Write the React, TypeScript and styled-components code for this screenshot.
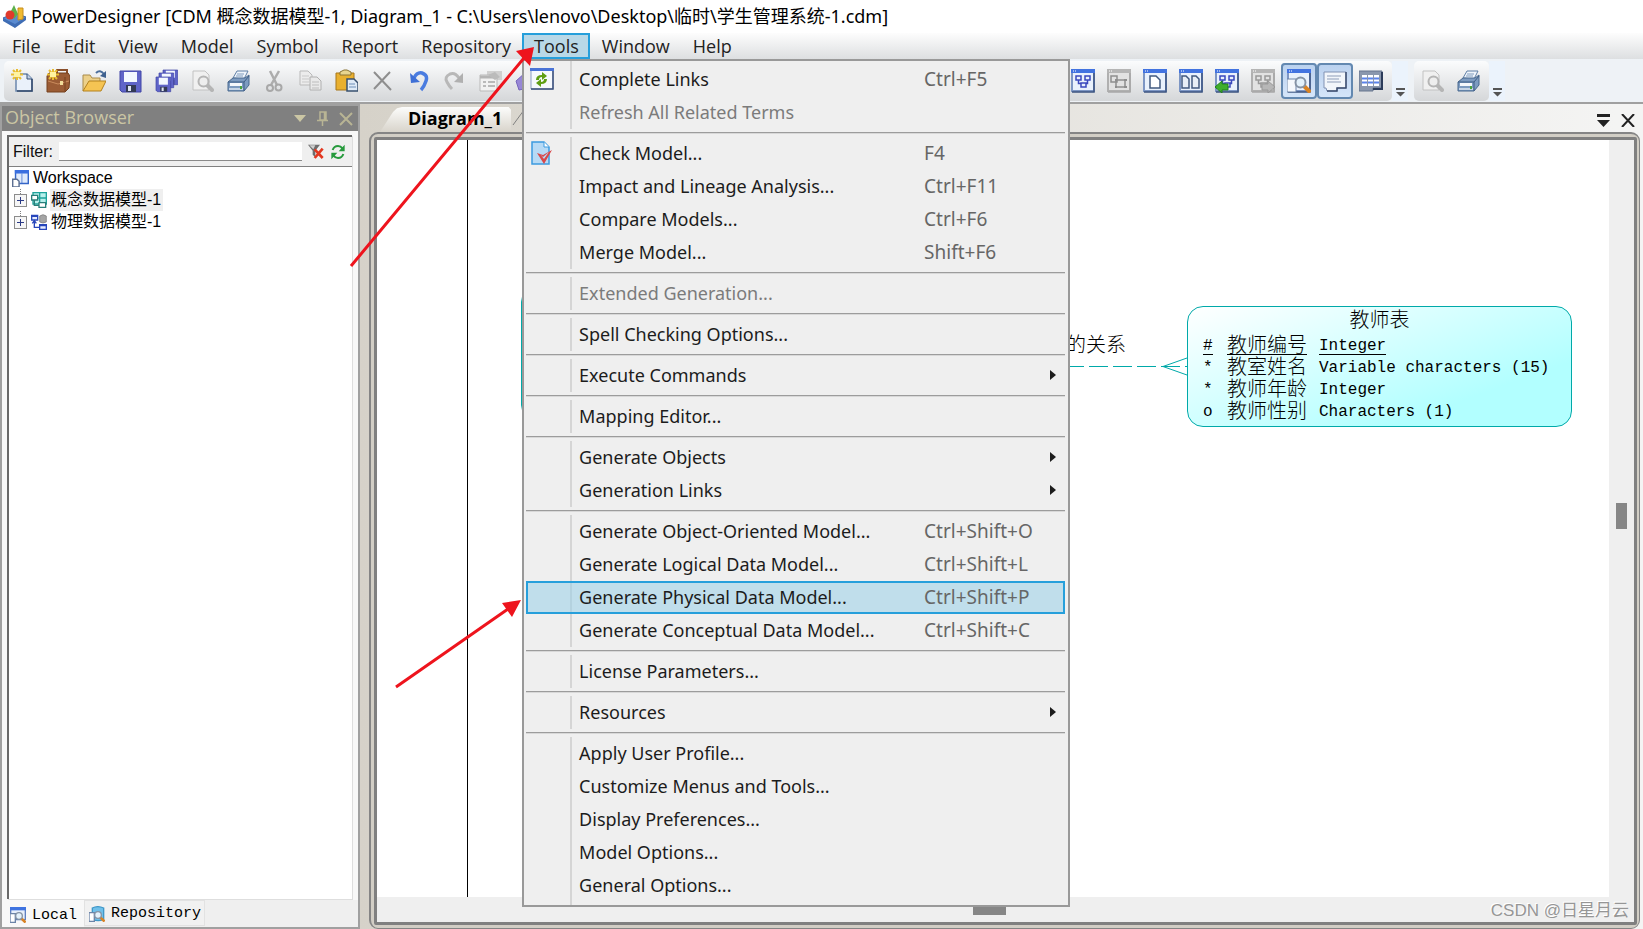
import React from "react";
import styled, { createGlobalStyle, css } from "styled-components";

const ui = `"Open Sans", "Noto Sans", "Noto Sans CJK SC", sans-serif`;
const wide = `"Noto Sans", "Noto Sans CJK SC", sans-serif`;
const arial = `"Liberation Sans", "Noto Sans CJK SC", sans-serif`;
const mono = `"Liberation Mono", "Noto Sans CJK SC", monospace`;

const GlobalStyle = createGlobalStyle`
  * { box-sizing: border-box; }
  body { margin: 0; background: #eef2f6; font-family: ${ui}; font-size: 18px; color: #111; }
  button, input { font: inherit; color: inherit; margin: 0; }
  button { border: 0; padding: 0; background: none; cursor: default; }
  svg { display: block; flex: none; }
`;

const Window = styled.div`
  position: relative;
  display: flex;
  flex-direction: column;
  height: 100vh;
  overflow: hidden;
`;

const TitleBar = styled.header`
  display: flex;
  align-items: center;
  gap: 4px;
  height: 33px;
  padding: 0 3px 2px;
  background: #fff;
  color: #000;
  white-space: nowrap;
`;

const Title = styled.h1`
  margin: 0;
  font-family: ${wide};
  font-size: 18px;
  line-height: 24px;
  font-weight: 400;
`;

const MenuBar = styled.nav`
  position: relative;
  z-index: 3;
  display: flex;
  height: 26px;
  background: linear-gradient(#fdfdfd, #dddfe1);
`;

const MenuItem = styled.div`
  position: relative;
`;

const MenuButton = styled.button<{ $open?: boolean }>`
  height: 26px;
  padding: 0 11px 0 12px;
  line-height: 26px;
  color: #222;
  ${(p) =>
    p.$open &&
    css`
      background: #b9d8e7;
      box-shadow: inset 0 0 0 2px #269fdb;
    `}
`;

const DropDown = styled.div`
  position: absolute;
  top: 26px;
  left: 0;
  width: 548px;
  padding: 2px 3px 3px 2px;
  background: linear-gradient(90deg, transparent 48px, #d5d5d5 48px, #d5d5d5 50px, transparent 50px) #efefef;
  background-origin: border-box;
  border: 2px solid #999;
  font-family: ${wide};
`;

const Entry = styled.button<{ $active?: boolean; $off?: boolean }>`
  display: grid;
  grid-template-columns: 53px 345px 126px 1fr;
  align-items: center;
  width: 100%;
  height: 33px;
  padding-bottom: 2px;
  text-align: left;
  white-space: nowrap;
  color: ${(p) => (p.$off ? "#7b7b7b" : "#1c1c1c")};
  ${(p) =>
    p.$active &&
    css`
      background: rgba(150, 208, 232, 0.52);
      box-shadow: inset 0 0 0 2px #269fdb;
    `}
`;

const Shortcut = styled.span`
  font-size: 19px;
  color: #666;
`;

const Rule = styled.hr`
  height: 8px;
  margin: 0;
  border: 0;
  background: linear-gradient(#efefef 3px, #9c9c9c 3px, #9c9c9c 4px, #d8d8d8 4px, #d8d8d8 5px, #efefef 5px);
`;

const ToolRow = styled.div`
  display: flex;
  height: 45px;
  padding: 2px 0 1px 4px;
  border-bottom: 2px solid #a0a0a0;
`;

const ToolGroup = styled.div<{ $grow?: boolean }>`
  display: flex;
  align-items: center;
  flex: ${(p) => (p.$grow ? "0 1 1388px" : "none")};
  padding-right: 3px;
  height: 40px;
  border-radius: 5px;
  background: linear-gradient(#fbfcfd, #d5d7d9);
`;

const Spacer = styled.div`
  flex: 1;
`;

const ToolButton = styled.button<{ $on?: boolean }>`
  display: flex;
  align-items: center;
  justify-content: center;
  width: 36px;
  height: 36px;
  border-radius: 4px;
  ${(p) =>
    p.$on &&
    css`
      background: linear-gradient(#b9d0ee, #d6e6fa);
      box-shadow: inset 0 0 0 2px #6388b0;
    `}
`;

const Overflow = styled.button`
  display: flex;
  align-items: flex-end;
  justify-content: center;
  width: 16px;
  height: 40px;
  margin-right: 6px;
  padding-bottom: 4px;
  background: #ebf3fc;
`;

const Body = styled.div`
  display: flex;
  flex: 1;
  min-height: 0;
`;

const Panel = styled.aside`
  display: flex;
  flex-direction: column;
  flex: none;
  width: 360px;
  border: 2px solid #a0a0a0;
  background: #f8f8f8;
`;

const PanelHeader = styled.div`
  display: flex;
  align-items: center;
  gap: 11px;
  height: 25px;
  padding: 0 5px 0 3px;
  background: #808080;
  color: #cbc6a4;
`;

const PanelTitle = styled.h2`
  flex: 1;
  margin: 0;
  padding-bottom: 2px;
  font-size: 18px;
  line-height: 23px;
  font-weight: 400;
`;

const Sunken = styled.div`
  display: flex;
  flex-direction: column;
  flex: 1;
  margin: 4px 6px 0 5px;
  border: solid #696969;
  border-width: 2px 0 0 2px;
  box-shadow: 1px 1px 0 #dedede;
  background: #fff;
`;

const FilterRow = styled.div`
  display: flex;
  align-items: center;
  gap: 6px;
  height: 30px;
  padding: 0 6px 0 4px;
  background: #efefef;
  border-bottom: 1px solid #808080;
  font-family: ${arial};
  font-size: 16px;
  line-height: 20px;
`;

const FilterInput = styled.input`
  flex: 1;
  min-width: 0;
  height: 19px;
  border: 0;
  border-bottom: 1px solid #8a8a8a;
  outline: 0;
  background: #fff;
`;

const Tree = styled.ul`
  list-style: none;
  margin: 0;
  padding: 0 0 0 3px;
  font-family: ${arial};
  font-size: 16px;
  line-height: 22px;
  color: #000;
`;

const TreeRow = styled.li<{ $child?: boolean }>`
  display: flex;
  align-items: center;
  gap: 3px;
  height: 22px;
  padding-left: ${(p) => (p.$child ? "2px" : "0")};
`;

const TreeLabel = styled.span<{ $selected?: boolean }>`
  padding: 0 2px 0 1px;
  background: ${(p) => (p.$selected ? "#efefef" : "none")};
`;

const PanelTabs = styled.div`
  display: flex;
  height: 27px;
  margin-top: 1px;
  background: #efefef;
  font-family: ${mono};
  font-size: 15px;
  color: #000;
`;

const PanelTab = styled.button<{ $on?: boolean }>`
  display: flex;
  align-items: center;
  gap: 6px;
  height: ${(p) => (p.$on ? "27px" : "26px")};
  padding: ${(p) => (p.$on ? "3px 7px 0 8px" : "1px 3px 0 4px")};
  background: ${(p) => (p.$on ? "#f8f8f8" : "#f1f1f1")};
  border: solid #e2e2e2;
  border-width: ${(p) => (p.$on ? "0" : "1px")};
`;

const Workspace = styled.main`
  display: flex;
  flex-direction: column;
  flex: 1;
  min-width: 0;
  padding: 0 3px 0 9px;
  background: linear-gradient(90deg, #d6d2c9, #f4f4f3 98%);
`;

const TabStrip = styled.div`
  display: flex;
  align-items: flex-end;
  height: 28px;
  padding: 0 5px 0 11px;
`;

const DocTab = styled.button`
  height: 25px;
  padding: 0 9px 2px 28px;
  line-height: 23px;
  font-weight: 700;
  color: #000;
  background: linear-gradient(#fcfcfb, #d8d4cb);
  clip-path: polygon(0 100%, 13px 20%, 17px 5%, 22px 0, 98% 0, 100% 12%, 100% 100%);
`;

const TabTools = styled.div`
  display: flex;
  align-items: center;
  gap: 11px;
  height: 24px;
  margin-left: auto;
`;

const Frame = styled.div`
  display: flex;
  flex: 1;
  min-height: 0;
  padding: 3px 2px 3px 3px;
  border: solid #858585;
  border-width: 2px 1px 1px 2px;
  border-radius: 9px;
  background: #d2cec5;
`;

const Sheet = styled.div`
  display: grid;
  grid-template: 1fr 25px / 1fr 25px;
  flex: 1;
  border: 3px solid #808080;
  border-radius: 2px;
  background: #efefef;
`;

const Paper = styled.div`
  position: relative;
  overflow: hidden;
  background: #fff;
`;

const PageEdge = styled.div`
  position: absolute;
  top: 0;
  bottom: 0;
  left: 90px;
  border-left: 1px solid #000;
`;

const Track = styled.div<{ $wide?: boolean }>`
  display: flex;
  align-items: ${(p) => (p.$wide ? "center" : "flex-start")};
  justify-content: ${(p) => (p.$wide ? "flex-start" : "center")};
  padding: ${(p) => (p.$wide ? "0 0 0 596px" : "363px 0 0")};
`;

const Thumb = styled.div<{ $wide?: boolean }>`
  width: ${(p) => (p.$wide ? "33px" : "11px")};
  height: ${(p) => (p.$wide ? "11px" : "26px")};
  background: #868686;
`;

const Entity = styled.section<{ $x: number; $y: number; $w: number; $h: number }>`
  position: absolute;
  left: ${(p) => p.$x}px;
  top: ${(p) => p.$y}px;
  width: ${(p) => p.$w}px;
  height: ${(p) => p.$h}px;
  padding: 0 15px;
  border: 1px solid #00a9a9;
  border-radius: 16px;
  background: linear-gradient(160deg, #fff, #b2ffff 75%);
  font-family: ${mono};
  font-size: 16px;
  line-height: 22px;
  color: #000;
  white-space: nowrap;
`;

const EntityName = styled.h3`
  margin: 0;
  height: 28px;
  line-height: 30px;
  font-size: 20px;
  font-weight: 300;
  text-align: center;
`;

const Attribute = styled.div<{ $key?: boolean }>`
  display: grid;
  grid-template: 22px / 24px 92px 1fr;
  span {
    justify-self: start;
    height: 20px;
    border-bottom: ${(p) => (p.$key ? "1px solid #000" : "0")};
  }
`;

const Han = styled.span`
  font-size: 20px;
  line-height: 24px;
  font-weight: 300;
`;

const RelationName = styled.div`
  position: absolute;
  left: 689px;
  top: 194px;
  font-family: ${mono};
  font-size: 20px;
  font-weight: 300;
  line-height: 26px;
  color: #000;
`;

const RelationLine = styled.svg`
  position: absolute;
  left: 660px;
  top: 210px;
`;

const Watermark = styled.div`
  position: absolute;
  right: 14px;
  bottom: 5px;
  font-family: ${arial};
  font-size: 17px;
  line-height: 26px;
  color: #969696;
  text-shadow: -1px -1px 0 #fff;
`;

const Arrows = styled.svg`
  position: absolute;
  z-index: 4;
  left: 0;
  top: 0;
  pointer-events: none;
`;

type Kid = { children?: React.ReactNode; size?: number };
const Ico = ({ children, size = 24 }: Kid) => (
  <svg width={size} height={size} viewBox="0 0 24 24" fill="none" aria-hidden="true">
    {children}
  </svg>
);

const Star = () => (
  <g stroke="#e8bd32" strokeWidth="2">
    <path d="M7 0v11M1 5.500h12M3 1l8 9M11 1l-8 9" />
    <rect x="4" y="3" width="6" height="5" fill="#fff3a0" stroke="none" />
  </g>
);

const Lens = ({ gray, x = 0, y = 0 }: { gray?: boolean; x?: number; y?: number }) => (
  <g transform={`translate(${x} ${y})`}>
    <path d="M16 16l5 5" stroke={gray ? "#b5b5b5" : "#d98324"} strokeWidth="4" strokeLinecap="round" />
    <circle cx="12.500" cy="12.500" r="5" fill={gray ? "#eee" : "#e3f1fb"} stroke={gray ? "#b5b5b5" : "#8593a5"} strokeWidth="2" />
  </g>
);

const FloppyShape = ({ x, y, s }: { x: number; y: number; s: number }) => (
  <g transform={`translate(${x} ${y}) scale(${s})`}>
    <path d="M0 0h21v21H2l-2-2z" fill="#5f64c8" stroke="#4145a6" />
    <path d="M4 1h13v10H4z" fill="#f3f8ff" />
    <path d="M6 14h10v7H6z" fill="#333a55" />
    <path d="M8 15h3v5H8z" fill="#dfe6f3" />
  </g>
);

const PrinterIcon = () => (
  <Ico>
    <path d="M7 9l4-7h11l-4 8z" fill="#eef4fb" stroke="#5f7fa6" />
    <path d="M11 5h7M10 7h7" stroke="#7f9bbd" />
    <path d="M2 13l5-4h12l4-3v10l-5 6H2z" fill="#7d9bc0" stroke="#49698f" />
    <path d="M2 13h16l5-6M18 13v9" stroke="#3f5d84" />
    <path d="M4 14h12v3H4z" fill="#f5f8fc" />
    <path d="M3 19h14v2H3z" fill="#c7d5e6" />
    <path d="M14 17h2v3h-2z" fill="#4aa53b" />
  </Ico>
);

const PreviewIcon = () => (
  <Ico>
    <path d="M3 2h12l4 4v15H3z" fill="#f0f0f0" stroke="#c2c2c2" />
    <Lens gray x={1} />
  </Ico>
);

const WinFrame = ({ gray, children }: { gray?: boolean; children?: React.ReactNode }) => (
  <Ico>
    <path d="M1 1h22v21H1z" fill={gray ? "#e2e2e2" : "#e9f1fc"} stroke={gray ? "#b0b0b0" : "#7d96c4"} strokeWidth="2" />
    <path d="M0 0h24v4H0z" fill={gray ? "#b5b5b5" : "#4273e0"} />
    <path d="M2 2h1M4 2h1" stroke="#fff" />
    <path d="M23 4v19H1" stroke={gray ? "#a8a8a8" : "#3c5480"} strokeWidth="1.500" />
    {children}
  </Ico>
);

const Nodes = ({ color }: { color: string }) => (
  <path d="M5 7h5v4H5zM14 7h5v4h-5zM10 14h5v4h-5zM7.500 11v3.500h3M16.500 11v3.500h-2" stroke={color} strokeWidth="1.500" />
);

const leftIcons: [string, React.ReactNode][] = [
  ["New Model", <Ico><path d="M6 5h11l5 5v12H6z" fill="#eaf1fa" stroke="#6b86ad" strokeWidth="1.500" /><path d="M17 5v5h5" fill="#bfd0e6" stroke="#3b5377" /><path d="M22 10v12H7" stroke="#34496b" strokeWidth="1.500" /><Star /></Ico>],
  ["New Project", <Ico><path d="M11 4V1h10v4" stroke="#8a4f2b" strokeWidth="2" /><path d="M1 7l2-3h19l2 3-1 12-4 4H1z" fill="#9b5c35" stroke="#74401f" /><path d="M2 12l10 3 11-3" stroke="#c98b5c" /><path d="M19 8v14" stroke="#74401f" /><path d="M14 12h3v4h-3z" fill="#f1dc9a" /><Star /></Ico>],
  ["Open", <Ico><path d="M1 22V6h7l2 3h8v3" fill="#ecd08a" stroke="#a98b4a" /><path d="M1 22l6-10h17l-5 10z" fill="#f5c453" stroke="#b3811f" /><path d="M14 4q4-4 8 1" stroke="#4c6f9c" strokeWidth="2" /><path d="M24 2v7l-6-2z" fill="#3f618f" /></Ico>],
  ["Save", <Ico><FloppyShape x={2} y={2} s={1} /></Ico>],
  ["Save All", <Ico><FloppyShape x={9} y={1} s={0.7} /><FloppyShape x={5} y={4} s={0.7} /><FloppyShape x={2} y={8} s={0.7} /></Ico>],
  ["Print Preview", <PreviewIcon />],
  ["Print", <PrinterIcon />],
  ["Cut", <Ico><path d="M8 2l7 14M17 2L9 16" stroke="#adadad" strokeWidth="2.500" /><circle cx="8" cy="19" r="3" stroke="#a8a8a8" strokeWidth="2" /><circle cx="16.500" cy="18.500" r="3" stroke="#a8a8a8" strokeWidth="2" /></Ico>],
  ["Copy", <Ico><path d="M2 2h8l4 4v10H2z" fill="#ececec" stroke="#b9b9b9" /><path d="M4 7h7M4 10h7M4 13h7" stroke="#c9c9c9" /><path d="M12 8h7l4 4v9H12z" fill="#e9e9e9" stroke="#b0b0b0" /><path d="M14 13h7M14 16h7M14 19h7" stroke="#bdbdbd" /></Ico>],
  ["Paste", <Ico><path d="M2 4h18v17H2z" fill="#e9b02f" stroke="#a7761b" /><path d="M6 6V3l4-2h3l4 2v3z" fill="#e9d58f" stroke="#8b7434" /><path d="M13 10h7l4 4v8H13z" fill="#dfeaf7" stroke="#38506f" strokeWidth="1.500" /><path d="M15 15h6M15 18h7" stroke="#6f8fb8" /></Ico>],
  ["Delete", <Ico><path d="M4 3l17 18M20 3L4 20" stroke="#8e8e8e" strokeWidth="2" /></Ico>],
  ["Undo", <Ico><path d="M8 9q3-6 8-5q6 2 4 8q-2 6-5 9" stroke="#4a7ce0" strokeWidth="3.500" /><path d="M4 4l1 10 9-1z" fill="#3f70d6" /></Ico>],
  ["Redo", <Ico><path d="M17 9q-4-6-9-4q-6 3-3 8q2 4 5 7" stroke="#b8b8b8" strokeWidth="3" /><path d="M21 4v10l-9-1z" fill="#b0b0b0" /></Ico>],
  ["Properties", <Ico><path d="M9 2h15v9H9z" fill="#d0d0d0" /><path d="M2 6h17v16H2z" fill="#f1f1f1" stroke="#b9b9b9" /><path d="M2 8h17" stroke="#b5b5b5" strokeWidth="3" /><path d="M5 13h3M10 13h7M5 17h3M10 17h7" stroke="#b9b9b9" strokeWidth="2" /><path d="M10 6l7-3 5 5-5 3z" fill="#bbb" /></Ico>],
  ["Impact", <Ico><path d="M2 12l10-9 11 4-9 12-9 2z" fill="#9787d6" stroke="#7565bb" /></Ico>],
];

const rightIcons: [string, React.ReactNode, boolean?][] = [
  ["Diagram", <WinFrame><Nodes color="#3a48bd" /></WinFrame>],
  ["Package", <WinFrame gray><path d="M4 7h6v6H4zM9 11h9v7H9z" stroke="#8e8e8e" strokeWidth="1.500" /><path d="M8 10h2v2H8zM17 10h3v2h-3zM8 17h2v2H8zM17 17h3v2h-3z" fill="#8e8e8e" /></WinFrame>],
  ["Page", <WinFrame><path d="M7 7h6l4 4v8H7z" fill="#fff" stroke="#41597f" strokeWidth="1.500" /></WinFrame>],
  ["All Pages", <WinFrame><path d="M3 7h4l3 3v9H3zM13 7h4l3 3v9h-7z" fill="#e8eef6" stroke="#41597f" strokeWidth="1.500" /></WinFrame>],
  ["Previous Diagram", <WinFrame><Nodes color="#3a48bd" /><path d="M0 18l7-6v3h6v6H7v3z" fill="#3fae2c" stroke="#23811a" /></WinFrame>],
  ["Next Diagram", <WinFrame gray><Nodes color="#999" /><path d="M24 18l-7-6v3h-6v6h6v3z" fill="#b7b7b7" stroke="#999" /></WinFrame>],
  ["Object Browser", <WinFrame><path d="M0 10h9v13H0z" fill="#f5f8fc" stroke="#6c84a8" /><Lens x={1} y={1} /></WinFrame>, true],
  ["Output", <Ico><path d="M1 3h22v16h-9v3H4l-1-3H1z" fill="#f2f6fb" stroke="#8192b3" /><path d="M4 7h14M4 10h12M4 13h14" stroke="#8e9db8" /><path d="M23 3v16h-9v3H4" stroke="#3c4e70" strokeWidth="1.500" /></Ico>, true],
  ["Result List", <Ico><path d="M0 2h23v17h-9v3H0z" fill="#8a97ad" stroke="#66748d" /><path d="M3 6h17v11H3z" fill="#fff" /><path d="M3 9.500h17M3 13.500h17" stroke="#5b83ea" strokeWidth="2" /><path d="M8.500 5v12M14.500 5v12" stroke="#8a97ad" /><path d="M23 3v17h-9" stroke="#2c3c5a" strokeWidth="2" /></Ico>],
];

const Chevron = () => (
  <svg width="9" height="10" viewBox="0 0 9 10" aria-hidden="true">
    <path d="M0 1h9v2H0zM0 5h9L4.500 9.500z" fill="#555" />
  </svg>
);

const LinksIcon = () => (
  <Ico>
    <path d="M1 2h22v20H1z" fill="#f6f9fd" stroke="#8a9dc2" />
    <path d="M0 1h24v3H0z" fill="#4a73d6" />
    <path d="M23 4v18H1" stroke="#3a4f7a" strokeWidth="1.500" />
    <path d="M6 13q0-5 6-5V5l5 4-5 4v-3q-3 0-3 3zM17 12q0 5-6 5v3l-5-4 5-4v3q3 0 3-3z" fill="#5f9e14" />
  </Ico>
);

const CheckIcon = () => (
  <Ico>
    <path d="M2 1h12l5 5v17H2z" fill="#b7daf5" stroke="#3d9bdf" strokeWidth="1.500" />
    <path d="M14 1v5h5" fill="#fff" stroke="#3d9bdf" />
    <path d="M7 12l6 2 9-5-8 14z" fill="#d9484a" />
    <path d="M10 13l3 3 6-5-5 7z" fill="#b7daf5" />
  </Ico>
);

type Row = { t: string; k?: string; off?: boolean; on?: boolean; sub?: boolean; icon?: React.ReactNode };
const groups: Row[][] = [
  [{ t: "Complete Links", k: "Ctrl+F5", icon: <LinksIcon /> }, { t: "Refresh All Related Terms", off: true }],
  [
    { t: "Check Model...", k: "F4", icon: <CheckIcon /> },
    { t: "Impact and Lineage Analysis...", k: "Ctrl+F11" },
    { t: "Compare Models...", k: "Ctrl+F6" },
    { t: "Merge Model...", k: "Shift+F6" },
  ],
  [{ t: "Extended Generation...", off: true }],
  [{ t: "Spell Checking Options..." }],
  [{ t: "Execute Commands", sub: true }],
  [{ t: "Mapping Editor..." }],
  [{ t: "Generate Objects", sub: true }, { t: "Generation Links", sub: true }],
  [
    { t: "Generate Object-Oriented Model...", k: "Ctrl+Shift+O" },
    { t: "Generate Logical Data Model...", k: "Ctrl+Shift+L" },
    { t: "Generate Physical Data Model...", k: "Ctrl+Shift+P", on: true },
    { t: "Generate Conceptual Data Model...", k: "Ctrl+Shift+C" },
  ],
  [{ t: "License Parameters..." }],
  [{ t: "Resources", sub: true }],
  [
    { t: "Apply User Profile..." },
    { t: "Customize Menus and Tools..." },
    { t: "Display Preferences..." },
    { t: "Model Options..." },
    { t: "General Options..." },
  ],
];

const IconCell = styled.span`
  padding-left: 4px;
`;

const ToolsMenu = () => (
  <DropDown role="menu" aria-label="Tools">
    {groups.map((rows, i) => (
      <React.Fragment key={i}>
        {i > 0 && <Rule />}
        {rows.map((r) => (
          <Entry key={r.t} role="menuitem" $active={r.on} $off={r.off} aria-disabled={r.off}>
            <IconCell>{r.icon}</IconCell>
            <span>{r.t}</span>
            <Shortcut>{r.k}</Shortcut>
            {r.sub ? (
              <svg width="6" height="10" viewBox="0 0 6 10" aria-hidden="true"><path d="M0 0l6 5-6 5z" fill="#1c1c1c" /></svg>
            ) : (
              <span />
            )}
          </Entry>
        ))}
      </React.Fragment>
    ))}
  </DropDown>
);

const menus = ["File", "Edit", "View", "Model", "Symbol", "Report", "Repository", "Tools", "Window", "Help"];

const Expander = () => (
  <svg width="14" height="22" viewBox="0 0 14 22" fill="none" aria-hidden="true">
    <path d="M6.500 0v5" stroke="#808080" strokeDasharray="1 1" />
    <rect x="0.500" y="5.500" width="12" height="12" fill="#f6f6f6" stroke="#8c8c8c" />
    <path d="M3 11.500h7M6.500 8v7" stroke="#2a3a86" />
  </svg>
);

const attributes = [
  { mark: "#", name: "教师编号", type: "Integer", key: true },
  { mark: "*", name: "教室姓名", type: "Variable characters (15)" },
  { mark: "*", name: "教师年龄", type: "Integer" },
  { mark: "o", name: "教师性别", type: "Characters (1)" },
];

export default function App() {
  return (
    <Window>
      <GlobalStyle />
      <TitleBar>
        <Ico>
          <path d="M0 14l12-5 11 4-11 10z" fill="#5a8bd0" stroke="#3e69ad" />
          <path d="M0 14v3l12 7 11-8v-3L12 20z" fill="#3f6db4" />
          <path d="M8 7l3-6 4 9-4 5z" fill="#5cb04a" />
          <circle cx="7" cy="11" r="4.500" fill="#e03a2b" />
          <path d="M15 4h5v11l-5 1z" fill="#f0bb32" stroke="#c88f1c" />
        </Ico>
        <Title>PowerDesigner [CDM 概念数据模型-1, Diagram_1 - C:\Users\lenovo\Desktop\临时\学生管理系统-1.cdm]</Title>
      </TitleBar>

      <MenuBar>
        {menus.map((m) => (
          <MenuItem key={m}>
            <MenuButton $open={m === "Tools"}>{m}</MenuButton>
            {m === "Tools" && <ToolsMenu />}
          </MenuItem>
        ))}
      </MenuBar>

      <ToolRow>
        <ToolGroup $grow>
          {leftIcons.map(([label, icon]) => (
            <ToolButton key={label} aria-label={label}>{icon}</ToolButton>
          ))}
          <Spacer />
          {rightIcons.map(([label, icon, on]) => (
            <ToolButton key={label} aria-label={label} $on={on}>{icon}</ToolButton>
          ))}
        </ToolGroup>
        <Overflow aria-label="More tools"><Chevron /></Overflow>
        <ToolGroup>
          <ToolButton aria-label="Preview"><PreviewIcon /></ToolButton>
          <ToolButton aria-label="Print diagram"><PrinterIcon /></ToolButton>
        </ToolGroup>
        <Overflow aria-label="More print tools"><Chevron /></Overflow>
      </ToolRow>

      <Body>
        <Panel>
          <PanelHeader>
            <PanelTitle>Object Browser</PanelTitle>
            <button aria-label="Panel menu"><svg width="12" height="7" viewBox="0 0 12 7"><path d="M0 0h12L6 7z" fill="#cbc6a4" /></svg></button>
            <button aria-label="Pin"><svg width="11" height="15" viewBox="0 0 11 15" fill="none"><path d="M3 1h6v8H3zM0 9.500h11M5.500 10v5M7.500 1v8" stroke="#b8b494" strokeWidth="1.500" /></svg></button>
            <button aria-label="Close panel"><svg width="14" height="14" viewBox="0 0 14 14"><path d="M1 1l12 12M13 1L1 13" stroke="#b8b494" strokeWidth="2" /></svg></button>
          </PanelHeader>
          <Sunken>
            <FilterRow>
              <label htmlFor="filter">Filter:</label>
              <FilterInput id="filter" />
              <button aria-label="Clear filter">
                <Ico size={16}><path d="M0 1h18l-7 9v10l-4-4v-6z" fill="#6d6d6d" /><path d="M2 2h9l-3 6z" fill="#cfcfcf" /><path d="M10 8l12 13M22 7L10 21" stroke="#e2371f" strokeWidth="4" /></Ico>
              </button>
              <button aria-label="Refresh">
                <Ico size={16}><path d="M4 9q2-6 8-6q4 0 7 4M20 15q-2 6-8 6q-4 0-7-4" stroke="#269a3c" strokeWidth="3" /><path d="M22 1v10h-9zM2 23V13h9z" fill="#269a3c" /></Ico>
              </button>
            </FilterRow>
            <Tree>
              <TreeRow>
                <Ico size={17}><path d="M5 1h18v18H5z" fill="#dfeafb" stroke="#3465c8" strokeWidth="2" /><path d="M4 0h20v5H4z" fill="#3a6fe0" /><path d="M14 5v14" stroke="#3465c8" /><path d="M1 13h6l3 3v8H1z" fill="#fff" stroke="#5c6f92" strokeWidth="2" /></Ico>
                <TreeLabel>Workspace</TreeLabel>
              </TreeRow>
              <TreeRow $child>
                <Expander />
                <Ico size={16}><path d="M3 1h20v17H3z" fill="#b8f0ec" stroke="#1fa39b" strokeWidth="2" /><path d="M13 1v17M3 9h20" stroke="#1fa39b" strokeWidth="2" /><path d="M1 5h9v7H1zM12 16h10v7H12z" fill="#fff" stroke="#2a7f7a" strokeWidth="2" /><path d="M5 12v8h7" stroke="#2a7f7a" strokeWidth="2" /></Ico>
                <TreeLabel $selected>概念数据模型-1</TreeLabel>
              </TreeRow>
              <TreeRow $child>
                <Expander />
                <Ico size={16}><path d="M1 2h9v7H1zM13 16h10v7H13z" fill="#e6ecff" stroke="#2746bb" strokeWidth="2" /><path d="M1 3h9M13 17h10" stroke="#2746bb" strokeWidth="3" /><path d="M13 3q5-4 10 0v9q-5 3-10 0z" fill="#a5a5a5" stroke="#777" /><path d="M5 11v9h7M2 14l3-4 3 4" stroke="#2746bb" strokeWidth="2" /></Ico>
                <TreeLabel>物理数据模型-1</TreeLabel>
              </TreeRow>
            </Tree>
          </Sunken>
          <PanelTabs>
            <PanelTab $on>
              <Ico size={16}><path d="M1 1h22v18H1z" fill="#e7effb" stroke="#5f7fc0" strokeWidth="2" /><path d="M0 0h24v5H0z" fill="#3f73e0" /><path d="M0 10h8v13H0z" fill="#fff" stroke="#6c84a8" strokeWidth="2" /><Lens x={1} y={1} /></Ico>
              Local
            </PanelTab>
            <PanelTab>
              <Ico size={16}><path d="M5 3q8-4 17 0v17q-8 4-17 0z" fill="#6fc0ea" stroke="#3f97c8" strokeWidth="2" /><path d="M0 10h8v13H0z" fill="#fff" stroke="#6c84a8" strokeWidth="2" /><Lens x={1} y={1} /></Ico>
              Repository
            </PanelTab>
          </PanelTabs>
        </Panel>

        <Workspace>
          <TabStrip>
            <DocTab>Diagram_1</DocTab>
            <svg width="14" height="25" viewBox="0 0 14 25" aria-hidden="true"><path d="M2 18L13 3" stroke="#808080" strokeWidth="1" /></svg>
            <TabTools>
              <button aria-label="Window list"><svg width="13" height="13" viewBox="0 0 13 13"><path d="M0 0h13v3H0zM0 6h13l-6.500 7z" fill="#222" /></svg></button>
              <button aria-label="Close diagram"><svg width="14" height="13" viewBox="0 0 14 13"><path d="M1 0l12 13M13 0L1 13" stroke="#222" strokeWidth="2" /></svg></button>
            </TabTools>
          </TabStrip>
          <Frame>
            <Sheet>
              <Paper>
                <PageEdge />
                <Entity $x={144} $y={146} $w={200} $h={135} />
                <RelationName>的关系</RelationName>
                <RelationLine width="150" height="32" viewBox="0 0 150 32" fill="none" stroke="#00a9a9">
                  <path d="M0 16.500H150" strokeDasharray="19 5" strokeDashoffset="20" />
                  <path d="M150 8L126 16.500L150 25" />
                </RelationLine>
                <Entity $x={810} $y={166} $w={385} $h={121}>
                  <EntityName>教师表</EntityName>
                  {attributes.map((a) => (
                    <Attribute key={a.name} $key={a.key}>
                      <span>{a.mark}</span>
                      <Han>{a.name}</Han>
                      <span>{a.type}</span>
                    </Attribute>
                  ))}
                </Entity>
              </Paper>
              <Track><Thumb /></Track>
              <Track $wide><Thumb $wide /></Track>
            </Sheet>
          </Frame>
        </Workspace>
      </Body>

      <Watermark>CSDN @日星月云</Watermark>
      <Arrows width="540" height="700" viewBox="0 0 540 700" aria-hidden="true">
        <path d="M351 266L524 58M396 687L508 609" stroke="#ee141d" strokeWidth="3" />
        <path d="M534 47L516 51L530 66zM521 600L502 603L512 617z" fill="#ee141d" />
      </Arrows>
    </Window>
  );
}
